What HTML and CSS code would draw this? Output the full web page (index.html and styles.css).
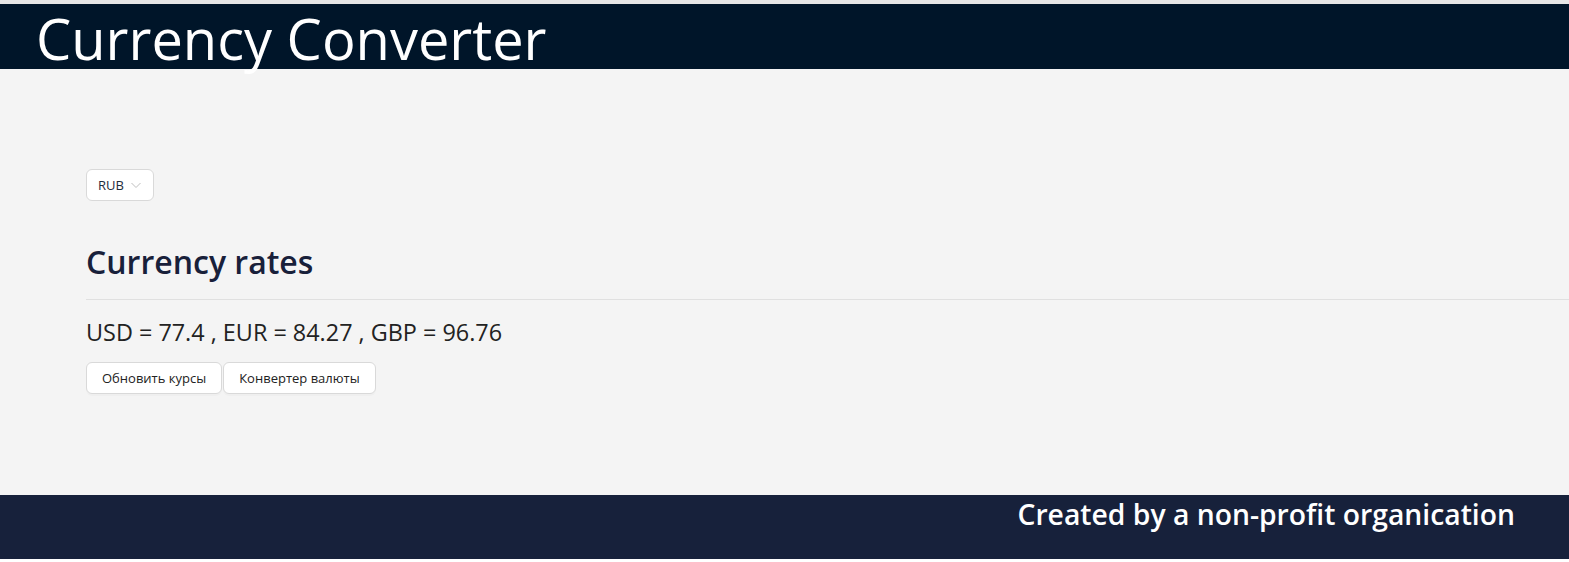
FILE: index.html
```html
<!DOCTYPE html>
<html lang="en">
<head>
<meta charset="utf-8">
<title>Currency Converter</title>
<link rel="stylesheet" href="styles.css">
</head>
<body>
<div class="page">
  <div class="topstrip"></div>
  <header class="header">
    <h1 class="title">Currency Converter</h1>
  </header>
  <main class="main">
    <div class="select">
      <span class="select-value">RUB</span>
      <svg class="select-arrow" width="12" height="12" viewBox="0 0 12 12"><path d="M1.5 4 L6 8.5 L10.5 4" fill="none" stroke="#bfbfbf" stroke-width="1"/></svg>
    </div>
    <h2 class="rates-title">Currency rates</h2>
    <div class="divider"></div>
    <p class="rates">USD = 77.4 , EUR = 84.27 , GBP = 96.76</p>
    <div class="buttons">
      <button class="btn">Обновить курсы</button>
      <button class="btn">Конвертер валюты</button>
    </div>
  </main>
  <footer class="footer">
    <span class="footer-text">Created by a non-profit organication</span>
  </footer>
</div>
</body>
</html>
```
FILE: styles.css
```css
html, body {
  margin: 0;
  padding: 0;
  background: #ffffff;
}
body {
  font-family: "Open Sans", "Noto Sans", sans-serif;
  color: #1a1a1a;
}
.page {
  display: flex;
  flex-direction: column;
  height: 559px;
}
.topstrip {
  height: 4px;
  background: #e6e6e6;
}
.header {
  height: 65px;
  background: #001529;
  padding-left: 36px;
  display: flex;
  align-items: flex-start;
}
.title {
  margin: 0;
  color: #ffffff;
  font-weight: 400;
  font-size: 56px;
  line-height: 1;
  letter-spacing: 0;
  padding-top: 6px;
  white-space: nowrap;
  height: 65px;
  overflow: visible;
  position: relative;
  z-index: 1;
}
.main {
  flex: 1;
  background: #f4f4f4;
  padding: 100px 0 0 86px;
  display: flex;
  flex-direction: column;
  align-items: flex-start;
}
.select {
  box-sizing: border-box;
  height: 32px;
  width: 68px;
  background: #ffffff;
  border: 1px solid #d9d9d9;
  border-radius: 6px;
  display: flex;
  align-items: center;
  padding-left: 11px;
  gap: 6px;
}
.select-value {
  font-size: 13px;
  color: #1f2d3d;
}
.select-arrow {
  display: block;
}
.rates-title {
  margin: 39px 0 0 0;
  font-size: 32px;
  font-weight: 600;
  color: #18203a;
  line-height: 44px;
}
.divider {
  align-self: stretch;
  height: 1px;
  background: #e0e0e0;
  margin-top: 15px;
}
.rates {
  margin: 17px 0 0 0;
  font-size: 23.4px;
  line-height: 30px;
  color: #222222;
}
.buttons {
  display: flex;
  gap: 1px;
  margin-top: 15px;
}
.btn {
  box-sizing: border-box;
  height: 32px;
  padding: 0 15px;
  background: #ffffff;
  border: 1px solid #d9d9d9;
  border-radius: 6px;
  font-family: "Open Sans", "Noto Sans", sans-serif;
  font-size: 13px;
  color: #222222;
  box-shadow: 0 2px 0 rgba(0,0,0,0.02);
}
.footer {
  height: 64px;
  background: #17213b;
  display: flex;
  justify-content: flex-end;
  align-items: flex-start;
  padding-right: 54px;
}
.footer-text {
  color: #ffffff;
  font-weight: 600;
  font-size: 28.3px;
  line-height: 38px;
}
```
